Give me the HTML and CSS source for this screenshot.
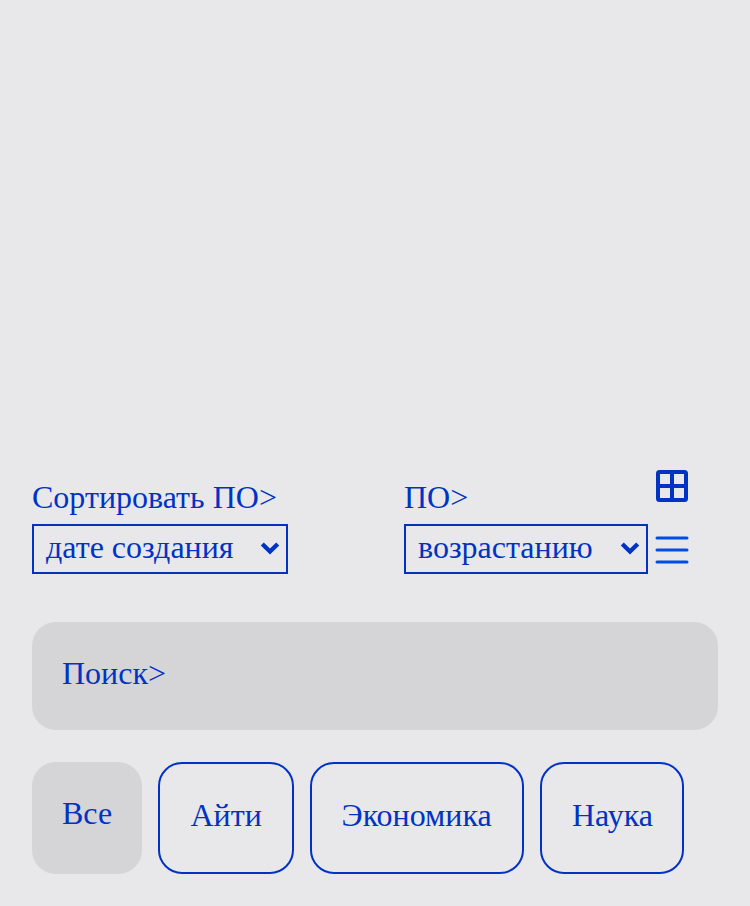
FILE: index.html
```html
<!DOCTYPE html>
<html lang="ru">
<head>
<meta charset="utf-8">
<title>Поиск</title>
<link rel="stylesheet" href="styles.css">
</head>
<body>
<main class="page">
  <section class="toolbar">
    <div class="sort sort-field">
      <span class="label">Сортировать ПО&gt;</span>
      <div class="select"><span>дате создания</span><svg class="chevron" viewBox="0 0 20 14"><path d="M2.3 3 10 10.6 17.7 3"/></svg></div>
    </div>
    <div class="sort sort-order">
      <span class="label">ПО&gt;</span>
      <div class="select"><span>возрастанию</span><svg class="chevron" viewBox="0 0 20 14"><path d="M2.3 3 10 10.6 17.7 3"/></svg></div>
    </div>
    <div class="views">
      <svg class="icon" viewBox="0 0 32 32"><rect x="2" y="2" width="28" height="28" rx="1.5"/><path d="M16 2V30M2 16H30"/></svg>
      <svg class="icon list" viewBox="0 0 32 32"><path d="M1 4H31M1 16H31M1 28H31"/></svg>
    </div>
  </section>
  <div class="search">Поиск&gt;</div>
  <nav class="tags">
    <span class="tag active">Все</span>
    <span class="tag it">Айти</span>
    <span class="tag economy">Экономика</span>
    <span class="tag science">Наука</span>
  </nav>
</main>
</body>
</html>
```

FILE: styles.css
```css
* { box-sizing: border-box; }
body {
  margin: 0;
  background: #e8e8ea;
  color: #0033c4;
  font: 32px/36px "Liberation Serif", serif;
}
.page { height: 906px; padding: 470px 32px 32px; overflow: hidden; }
.toolbar { display: flex; height: 104px; }
.sort { padding-top: 9px; }
.sort-field { width: 256px; margin-right: 116px; }
.sort-order { width: 244px; margin-right: 8px; }
.label { display: block; height: 45px; }
.select {
  display: flex;
  justify-content: space-between;
  height: 50px;
  padding: 3px 6px 0 12px;
  border: 2px solid #0033c4;
  white-space: nowrap;
}
.chevron { width: 20px; height: 14px; margin-top: 12px; fill: none; stroke: #0033c4; stroke-width: 4.3; }
.views { display: flex; flex-direction: column; justify-content: space-between; height: 96px; }
.icon { width: 32px; height: 32px; fill: none; stroke: #0033c4; stroke-width: 4; overflow: visible; }
.list { stroke: #004de6; stroke-width: 3; stroke-linecap: round; }
.search { width: 686px; height: 108px; margin-top: 48px; padding: 33px 30px; border-radius: 24px; background: #d5d5d7; }
.tags { display: flex; gap: 16px; margin-top: 32px; }
.tag { height: 112px; padding: 33px 30px; border: 2px solid #0033c4; border-radius: 24px; white-space: nowrap; }
.active { width: 110px; border: 0; background: #d5d5d7; }
.it { width: 136px; padding-left: 30.5px; }
.economy { width: 214px; padding-inline: 29.5px; }
.science { width: 144px; padding-inline: 30px; }
```
